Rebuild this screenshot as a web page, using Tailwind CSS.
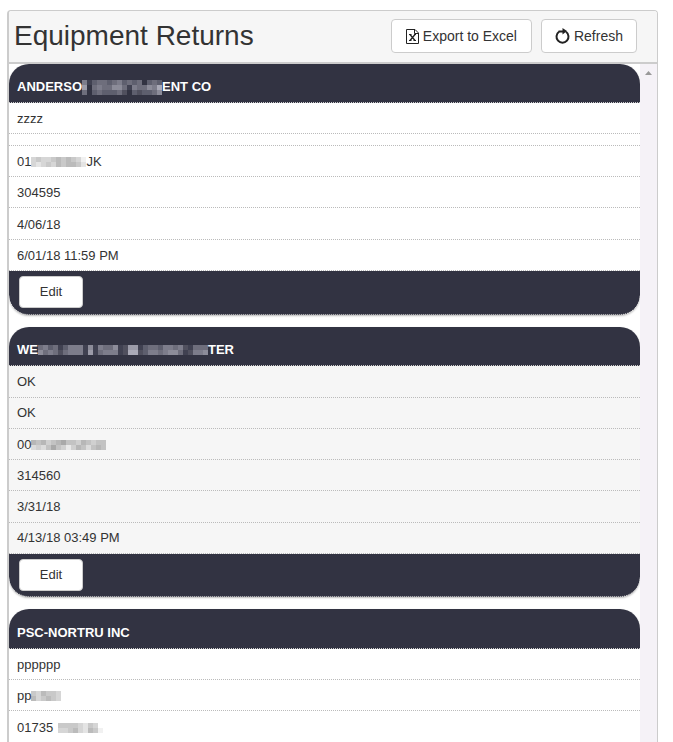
<!DOCTYPE html>
<html lang="en">
  <head>
    <meta charset="UTF-8" />
    <meta name="viewport" content="width=device-width, initial-scale=1.0" />
    <title>Equipment Returns</title>
    <script src="https://cdn.jsdelivr.net/npm/@tailwindcss/browser@4"></script>
  </head>
  <body
    class="h-screen overflow-hidden bg-white pt-[10px] pr-[15px] pl-[7px] font-['Liberation_Sans',Arial,sans-serif] text-[13px] leading-4 text-[#333]"
  >
    <div
      class="flex h-full flex-col overflow-hidden rounded-t border border-b-0 border-l-2 border-[#ccc] bg-white"
    >
      <header
        class="flex items-center border-b-2 border-[#ccc] bg-[#f6f6f6] pt-2 pr-5 pb-[9px] pl-[5px]"
      >
        <h1 class="flex-1 text-[28px] leading-[34px]">Equipment Returns</h1>
        <div class="flex gap-[9px] text-sm">
          <button
            type="button"
            class="flex h-[34px] items-center gap-1 rounded border border-[#ccc] bg-white px-[14px]"
          >
            <svg class="h-[15px] w-[13px]" viewBox="0 0 13 15" fill="none" stroke="#222">
              <path d="M.5.5h8.500l3.500 3.500v10.500H.5z" />
              <path d="M8.500.5v4H12" />
              <path d="M4 5.500l5 6M9 5.500l-5 6" stroke-width="1.300" />
              <path d="M3 5.500h2.500M8 5.500h2M3 11.500h2.500M7.500 11.500H10" />
            </svg>
            Export to Excel
          </button>
          <button
            type="button"
            class="flex h-[34px] items-center gap-1 rounded border border-[#ccc] bg-white px-[13px]"
          >
            <svg class="h-4 w-[15px]" viewBox="0 0 15 16">
              <path
                d="M4 3.800A6 6 0 1 0 11 3.800"
                fill="none"
                stroke="#222"
                stroke-width="2"
              />
              <path d="M3.500 2.500h4V0l4.500 3L7.500 6.500V4.500h-4z" fill="#222" />
            </svg>
            Refresh
          </button>
        </div>
      </header>

      <div class="flex min-h-0 flex-1">
        <main class="flex min-w-0 flex-1 flex-col gap-3 overflow-hidden">
          <section class="shrink-0 overflow-hidden rounded-[20px] shadow-[0_1px_2px_#bbb]">
            <h2
              class="flex h-[39px] items-center border-b border-dotted border-[#ccc] bg-[#323342] px-2 pt-2 font-bold text-white"
            >
              ANDERSO<svg class="mosaic fill-[#c8c8d4]" data-cells="5134434534340343 7045446641544658 4034333420323346"></svg>ENT CO
            </h2>
            <ul>
              <li class="flex h-[31px] items-center border-b border-dotted border-[#bbb] px-2 pt-0.5">zzzz</li>
              <li class="h-3 border-b border-dotted border-[#bbb]"></li>
              <li class="flex h-[31px] items-center border-b border-dotted border-[#bbb] px-2 pt-0.5">
                01<svg class="mosaic fill-[#777]" data-cells="34334545431 32343545542"></svg>JK
              </li>
              <li class="flex h-[31px] items-center border-b border-dotted border-[#bbb] px-2 pt-0.5">304595</li>
              <li class="flex h-8 items-center border-b border-dotted border-[#bbb] px-2 pt-0.5">4/06/18</li>
              <li class="flex h-[31px] items-center border-b border-dotted border-[#bbb] px-2 pt-0.5">6/01/18 11:59 PM</li>
            </ul>
            <footer class="h-11 rounded-b-[20px] border-b border-dotted border-[#ccc] bg-[#323342] px-[10px] pt-[5px]">
              <button type="button" class="h-8 w-16 rounded border border-[#ccc] bg-white">Edit</button>
            </footer>
          </section>

          <section class="shrink-0 overflow-hidden rounded-[20px] bg-[#f6f6f6] shadow-[0_1px_2px_#bbb]">
            <h2
              class="flex h-[39px] items-center border-b border-dotted border-[#ccc] bg-[#323342] px-2 pt-2 font-bold text-white"
            >
              WE<svg class="mosaic fill-[#c8c8d4]" data-cells="4534135551615446127713443554521444 6454245551714555128823554566412556"></svg>TER
            </h2>
            <ul>
              <li class="flex h-8 items-center border-b border-dotted border-[#bbb] px-2">OK</li>
              <li class="flex h-[31px] items-center border-b border-dotted border-[#bbb] px-2">OK</li>
              <li class="flex h-[31px] items-center border-b border-dotted border-[#bbb] px-2 pt-0.5">
                00<svg class="mosaic fill-[#777]" data-cells="545345644354344 232464313542454"></svg>
              </li>
              <li class="flex h-[31px] items-center border-b border-dotted border-[#bbb] px-2 pt-0.5">314560</li>
              <li class="flex h-8 items-center border-b border-dotted border-[#bbb] px-2">3/31/18</li>
              <li class="flex h-[31px] items-center border-b border-dotted border-[#bbb] px-2">4/13/18 03:49 PM</li>
            </ul>
            <footer class="h-[43px] rounded-b-[20px] border-b border-dotted border-[#ccc] bg-[#323342] px-[10px] pt-[5px]">
              <button type="button" class="h-8 w-16 rounded border border-[#ccc] bg-white">Edit</button>
            </footer>
          </section>

          <section class="shrink-0 overflow-hidden rounded-[20px] shadow-[0_1px_2px_#bbb]">
            <h2
              class="flex h-10 items-center border-b border-dotted border-[#ccc] bg-[#323342] px-2 pt-2 font-bold text-white"
            >
              PSC-NORTRU INC
            </h2>
            <ul>
              <li class="flex h-[31px] items-center border-b border-dotted border-[#bbb] px-2 pt-0.5">pppppp</li>
              <li class="flex h-[31px] items-center border-b border-dotted border-[#bbb] px-2 pt-0.5">
                pp<svg class="mosaic fill-[#777]" data-cells="435443 534543"></svg>
              </li>
              <li class="flex h-8 items-center border-b border-dotted border-[#bbb] px-2 pt-0.5">
                01735<svg class="mosaic fill-[#777]" data-cells="0444432430 0334532541"></svg>
              </li>
              <li class="h-[31px] border-b border-dotted border-[#bbb]"></li>
            </ul>
            <footer class="h-11 rounded-b-[20px] bg-[#323342]"></footer>
          </section>
        </main>

        <div class="flex w-[17px] justify-center bg-[#f5f2f7] pt-[7px]">
          <svg class="h-1 w-[7px] fill-[#999]" viewBox="0 0 7 4"><path d="M3.500 0L7 4H0z" /></svg>
        </div>
      </div>
    </div>

    <script>
      const CELL = 5;

      // Each group of digits is one row, each digit the strength of one cell
      document.querySelectorAll(".mosaic").forEach((svg) => {
        const rows = svg.dataset.cells.split(" ");
        svg.setAttribute("width", rows[0].length * CELL);
        svg.setAttribute("height", rows.length * CELL);
        rows.forEach((row, y) => {
          [...row].forEach((level, x) => {
            const rect = document.createElementNS("http://www.w3.org/2000/svg", "rect");
            rect.setAttribute("x", x * CELL);
            rect.setAttribute("y", y * CELL);
            rect.setAttribute("width", CELL);
            rect.setAttribute("height", CELL);
            rect.setAttribute("fill-opacity", level / 10);
            svg.appendChild(rect);
          });
        });
      });
    </script>
  </body>
</html>
